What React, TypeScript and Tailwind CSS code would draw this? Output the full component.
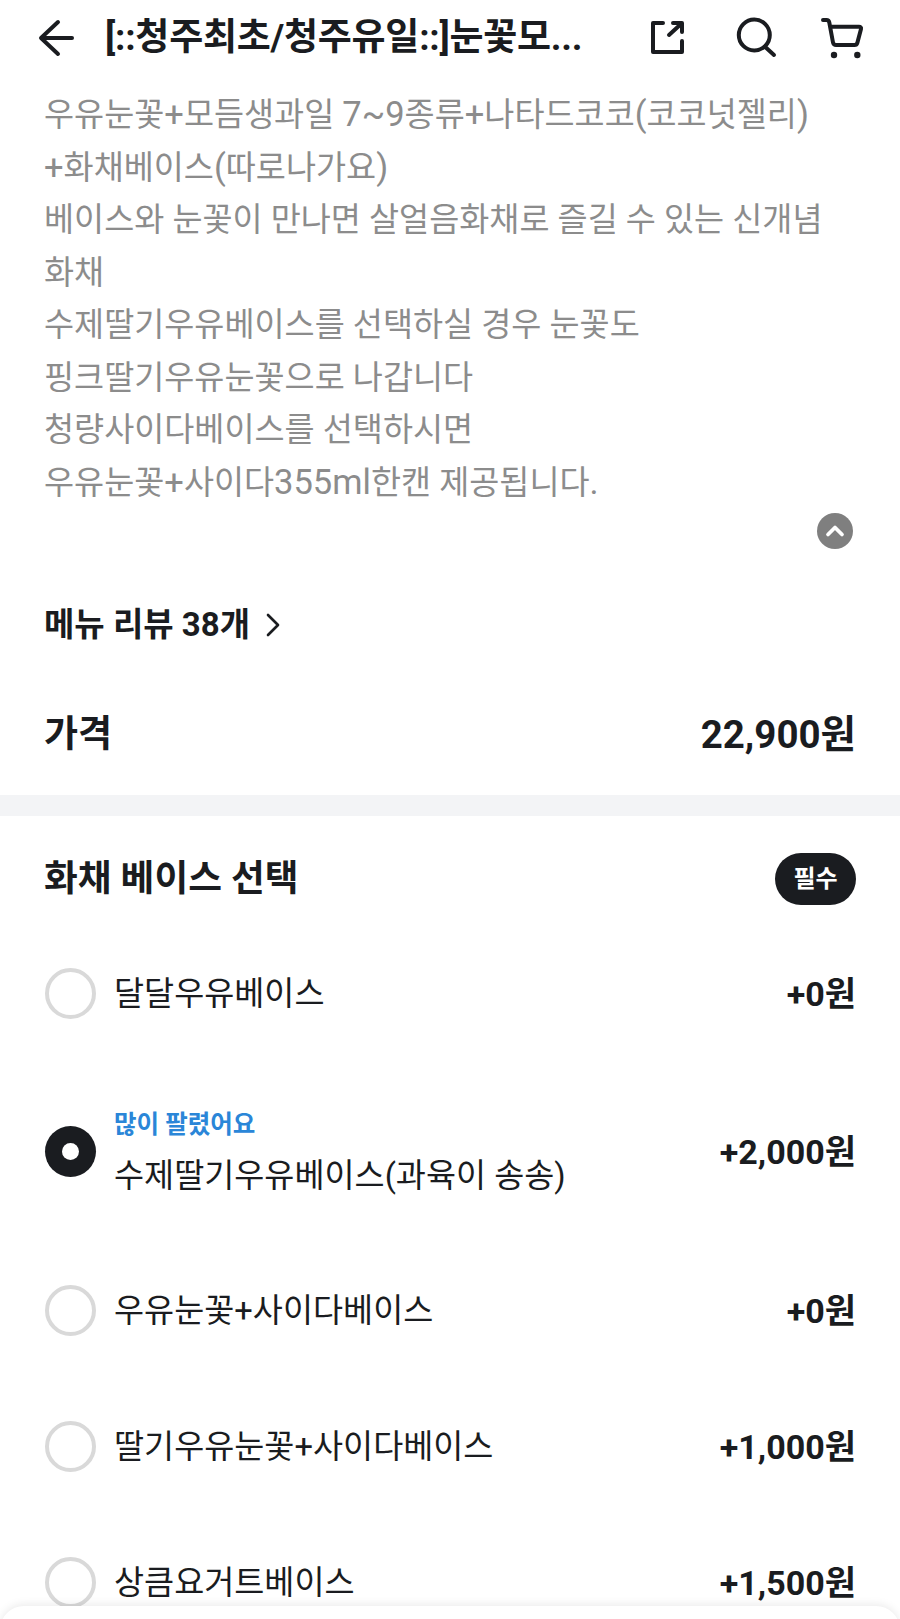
import React from 'react';
import { ChevronRight, ChevronUp } from 'lucide-react';

const font = "font-['Roboto','Noto_Sans_CJK_KR',sans-serif]";

const description = [
  '우유눈꽃+모듬생과일 7~9종류+나타드코코(코코넛젤리)',
  '+화채베이스(따로나가요)',
  '베이스와 눈꽃이 만나면 살얼음화채로 즐길 수 있는 신개념',
  '화채',
  '수제딸기우유베이스를 선택하실 경우 눈꽃도',
  '핑크딸기우유눈꽃으로 나갑니다',
  '청량사이다베이스를 선택하시면',
  '우유눈꽃+사이다355ml한캔 제공됩니다.',
];

function Icon({ children, className }: { children: React.ReactNode; className?: string }) {
  return (
    <svg width="44" height="44" viewBox="0 0 44 44" fill="none" stroke="#1a1c20" strokeWidth="4" strokeLinecap="round" strokeLinejoin="round" className={className}>
      {children}
    </svg>
  );
}

// latin runs sit a little larger than the hangul in the reference
function DescriptionLine({ text }: { text: string }) {
  return (
    <p className="h-[52.5px] text-[32.7px] leading-[52.5px] text-[#8c8c8c]">
      {text.split(/([!-~]+)/).map((part, i) =>
        i % 2 === 1 ? <span key={i} className="text-[34.5px] leading-none">{part}</span> : part
      )}
    </p>
  );
}

function OptionRow({ label, price, badge, selected, className }: { label: string; price: string; badge?: string; selected?: boolean; className: string }) {
  return (
    <div className={`flex items-center justify-between ${className}`}>
      <div className="ml-px flex items-center gap-[18px]">
        {selected ? (
          <div className="flex h-[51px] w-[51px] items-center justify-center rounded-full bg-[#1a1c20]">
            <div className="h-[17px] w-[17px] rounded-full bg-white" />
          </div>
        ) : (
          <div className="h-[51px] w-[51px] rounded-full border-[4px] border-[#d9d9d9]" />
        )}
        <div className={`flex flex-col ${badge ? 'pt-[4px]' : ''}`}>
          {badge && <span className="text-[24.5px] leading-[32px] font-bold text-[#2a86d8]">{badge}</span>}
          <span className={`text-[32.7px] leading-[44px] text-[#1a1c20] ${badge ? 'mt-[13px]' : ''}`}>{label}</span>
        </div>
      </div>
      <span className="text-[34px] leading-[44px] font-bold text-[#1a1c20]">{price}</span>
    </div>
  );
}

export default function App() {
  return (
    <div className={`relative h-[1619px] w-[900px] overflow-hidden bg-white ${font}`}>
      {/* Header */}
      <header className="flex h-[76px] items-center pr-[36px] text-[#1a1c20]">
        <Icon className="ml-[36px]">
          <path d="M6 22H36" />
          <path d="M22 6L5 22L22 38" />
        </Icon>
        <h1 className="ml-[25px] whitespace-nowrap text-[37px] font-bold tracking-[-0.25px]">[::청주최초/청주유일::]눈꽃모...</h1>
        <div className="ml-auto flex items-center">
          <Icon>
            <path d="M18 7H8V36H37V25" />
            <path d="M24 19L36 8" />
            <path d="M28 7H37V16" />
          </Icon>
          <Icon className="ml-[45px]">
            <circle cx="20.3" cy="19" r="15.5" />
            <path d="M31 30.7L40 39" />
          </Icon>
          <Icon className="ml-[42px]">
            <path d="M3 4H6.5C8 4 9 5 9.3 6.5L13 26.5C13.4 28 14.5 29 16 29H34.5C36 29 37 28 37.4 26.6L41 13C41.4 11.5 40.5 10.7 39 10.7H10" />
            <circle cx="14" cy="39" r="3.2" fill="#1a1c20" stroke="none" />
            <circle cx="37.3" cy="39" r="3.2" fill="#1a1c20" stroke="none" />
          </Icon>
        </div>
      </header>

      {/* Description */}
      <section className="px-[44px] pt-[13px]">
        {description.map((line) => (
          <DescriptionLine key={line} text={line} />
        ))}
        <div className="mt-[4px] flex justify-end pr-[3px]">
          <div className="flex h-[36px] w-[36px] items-center justify-center rounded-full bg-[#7f7f7f] text-white">
            <ChevronUp size={28} strokeWidth={3.2} />
          </div>
        </div>
      </section>

      {/* Review link */}
      <div className="mt-[54px] flex items-center gap-[3px] px-[44px]">
        <span className="text-[33px] leading-[44px] font-bold text-[#1a1c20]">메뉴 리뷰 38개</span>
        <ChevronRight size={40} strokeWidth={1.6} className="text-[#1a1c20]" />
      </div>

      {/* Price */}
      <div className="mt-[64px] flex items-center justify-between px-[44px] pb-[36px]">
        <span className="text-[37px] leading-[48px] font-bold text-[#1a1c20]">가격</span>
        <span className="text-[38.5px] leading-[48px] font-bold text-[#1a1c20]">22,900원</span>
      </div>

      <div className="h-[21px] bg-[#f3f4f6]" />

      {/* Options */}
      <section className="px-[44px] pt-[37px]">
        <div className="flex items-center justify-between">
          <h2 className="text-[36.7px] leading-[52px] font-bold text-[#1a1c20]">화채 베이스 선택</h2>
          <span className="flex h-[52px] w-[81px] items-center justify-center rounded-full bg-[#1a1c20] text-[24px] font-bold text-white">필수</span>
        </div>
        <OptionRow className="mt-[63px]" label="달달우유베이스" price="+0원" />
        <OptionRow className="mt-[86px]" label="수제딸기우유베이스(과육이 송송)" price="+2,000원" badge="많이 팔렸어요" selected />
        <OptionRow className="mt-[87px]" label="우유눈꽃+사이다베이스" price="+0원" />
        <OptionRow className="mt-[85px]" label="딸기우유눈꽃+사이다베이스" price="+1,000원" />
        <OptionRow className="mt-[85px]" label="상큼요거트베이스" price="+1,500원" />
      </section>

      {/* Bottom sheet edge */}
      <div className="absolute inset-x-0 bottom-[-20px] h-[33px] rounded-t-[24px] bg-white shadow-[0_-2px_8px_rgba(0,0,0,0.08)]" />
    </div>
  );
}
